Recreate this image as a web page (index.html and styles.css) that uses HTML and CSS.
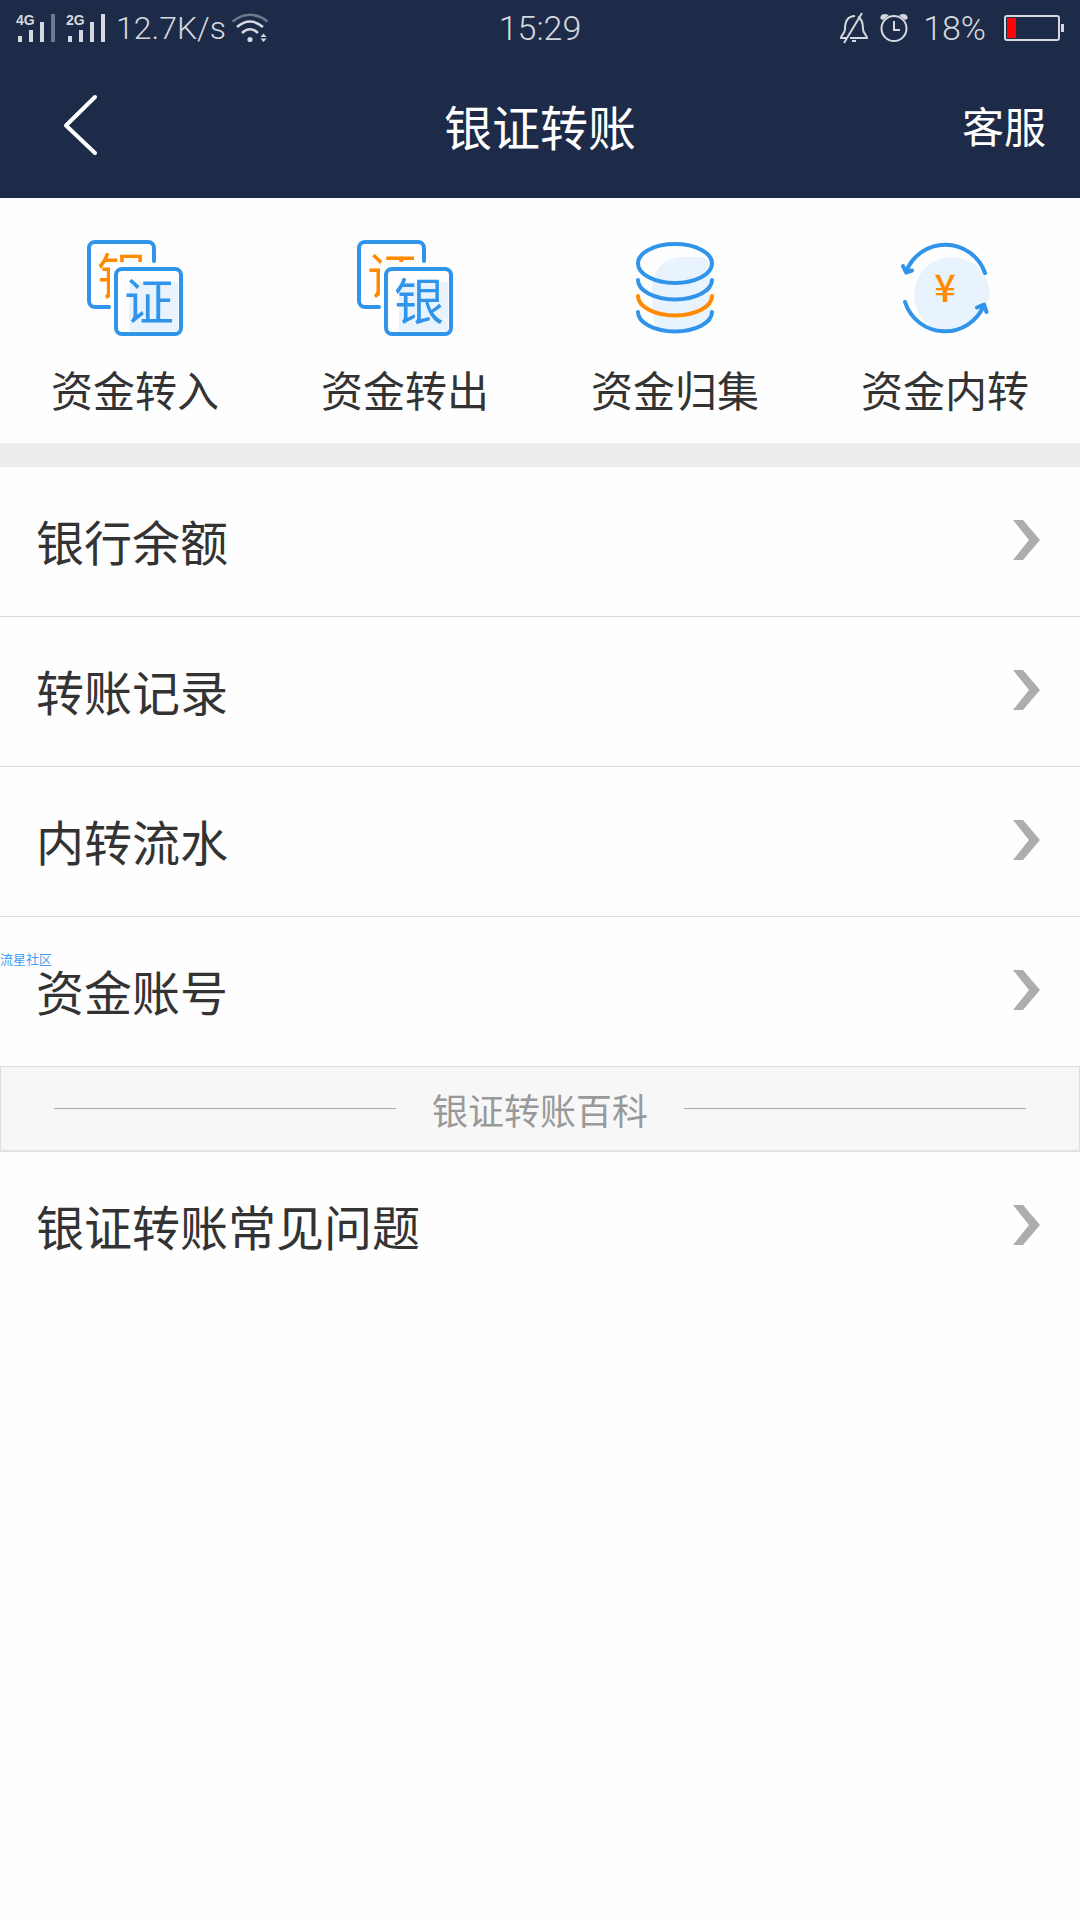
FILE: index.html
```html
<!DOCTYPE html>
<html lang="zh-CN">
<head>
<meta charset="utf-8">
<meta name="viewport" content="width=device-width, initial-scale=1">
<title>银证转账</title>
<link rel="stylesheet" href="styles.css">
</head>
<body>
<header class="top">
  <div class="status">
    <div class="status-side">
      <svg class="signal" width="40" height="30" viewBox="0 0 40 30" aria-hidden="true">
        <text class="net" x="0" y="12">4G</text>
        <path d="M2 23h4v6H2zM13 17h4v12h-4zM24 9h4v20h-4z"/><path class="dim" d="M35 1h4v28h-4z"/>
      </svg>
      <svg class="signal signal-second" width="40" height="30" viewBox="0 0 40 30" aria-hidden="true">
        <text class="net" x="0" y="12">2G</text>
        <path d="M2 23h4v6H2zM13 17h4v12h-4zM24 9h4v20h-4zM35 1h4v28h-4z"/>
      </svg>
      <span class="speed">12.7K/s</span>
      <svg width="38" height="30" viewBox="0 0 38 30" aria-hidden="true">
        <g fill="none" stroke="currentColor" stroke-width="2.6">
          <path class="dim" d="M1.500 8.500Q19-5 36.500 8.500"/>
          <path d="M6 14Q19 3 32 14M11 20Q19 12.500 27 20"/>
        </g>
        <circle cx="19" cy="26.500" r="2.600" fill="currentColor"/>
        <path d="M29.500 24l3-3.500 3 3.500zM29.500 25.500h6l-3 3.500z" fill="currentColor"/>
      </svg>
    </div>
    <time class="clock">15:29</time>
    <div class="status-side status-right">
      <svg width="30" height="32" viewBox="0 0 30 32" fill="none" stroke="currentColor" stroke-width="2" aria-hidden="true">
        <path d="M7 26H2c0-3 4-4 4-9C6 8 9 4 16 4M19 5c4 2 5 6 5 12 0 5 4 6 4 9H11M5 31L23 1M13 29h4"/>
      </svg>
      <svg width="30" height="32" viewBox="0 0 30 32" fill="none" stroke="currentColor" stroke-width="2" aria-hidden="true">
        <circle cx="15" cy="16.500" r="12.500"/><path d="M15 9v9h6"/>
        <path d="M2.500 7C2 3.500 5 2 8 3.500L3 7.500M27.500 7c.5-3.500-2.500-5-5.500-3.500l5 4" fill="currentColor"/>
      </svg>
      <span class="percent">18%</span>
      <svg width="60" height="26" viewBox="0 0 60 26" aria-hidden="true">
        <rect x="1" y="1" width="54" height="24" rx="2" fill="none" stroke="currentColor" stroke-width="2"/>
        <path d="M3 3h9v20H3z" fill="#ff0505"/><path d="M57 9h3v8h-3z" fill="currentColor"/>
      </svg>
    </div>
  </div>
  <div class="titlebar">
    <button class="back" type="button" aria-label="返回">
      <svg width="36" height="62" viewBox="0 0 36 62" fill="none" stroke="currentColor" stroke-width="4" stroke-linecap="round" stroke-linejoin="round" aria-hidden="true"><path d="M33 3L4 31.500L33 59"/></svg>
    </button>
    <h1 class="title">银证转账</h1>
    <a class="service" href="#service">客服</a>
  </div>
</header>
<main>
  <nav class="actions">
    <a class="action" href="#in">
      <svg class="icon" viewBox="0 0 110 110" aria-hidden="true">
        <defs><clipPath id="peek"><path d="M0 0H74V32H38L30 37V110H0z"/></clipPath></defs>
        <path class="tint" d="M49 52H98V101H49z"/>
        <path class="blue" d="M74 31V18a6 6 0 0 0-6-6H15a6 6 0 0 0-6 6V71a6 6 0 0 0 6 6H29"/>
        <rect class="blue" x="36" y="39" width="65" height="65" rx="6"/>
        <text class="glyph glyph-orange" x="17" y="65" clip-path="url(#peek)">银</text>
        <text class="glyph" x="44" y="90">证</text>
      </svg>
      <span>资金转入</span>
    </a>
    <a class="action" href="#out">
      <svg class="icon" viewBox="0 0 110 110" aria-hidden="true">
        <path class="tint" d="M49 52H98V101H49z"/>
        <path class="blue" d="M74 31V18a6 6 0 0 0-6-6H15a6 6 0 0 0-6 6V71a6 6 0 0 0 6 6H29"/>
        <rect class="blue" x="36" y="39" width="65" height="65" rx="6"/>
        <text class="glyph glyph-orange" x="17" y="65" clip-path="url(#peek)">证</text>
        <text class="glyph" x="44" y="90">银</text>
      </svg>
      <span>资金转出</span>
    </a>
    <a class="action" href="#collect">
      <svg class="icon" viewBox="0 0 110 110" aria-hidden="true">
        <path class="tint" d="M32 60C32 38 46 27 64 27H80C86 28 89 31 90 36V86C85 98 60 102 55 102C45 102 36 98 34 92C32 82 32 70 32 60z"/>
        <ellipse class="blue" cx="55" cy="33.500" rx="37" ry="19.500"/>
        <path class="blue" d="M18 50A37 19.500 0 0 0 92 50M18 82A37 19.500 0 0 0 92 82"/>
        <path class="blue orange" d="M18 66A37 19.500 0 0 0 92 66"/>
      </svg>
      <span>资金归集</span>
    </a>
    <a class="action" href="#internal">
      <svg class="icon" viewBox="0 0 110 110" aria-hidden="true">
        <defs><clipPath id="disc"><circle cx="55" cy="58" r="45"/></clipPath></defs>
        <circle class="tint" cx="62" cy="65" r="38" clip-path="url(#disc)"/>
        <path class="blue" d="M16 42A42 42 0 0 1 95 43M15 72A42 42 0 0 0 94 75M13 36L16 42.500L22 40.500M87 77.500L94 74.500L96.500 82"/>
        <text class="yen" x="55" y="72">¥</text>
      </svg>
      <span>资金内转</span>
    </a>
  </nav>
  <ul class="list">
    <li><a class="row" href="#balance">银行余额<svg class="chevron" viewBox="0 0 28 40" aria-hidden="true"><path d="M1 0H11L28 20L11 40H1L17 20z"/></svg></a></li>
    <li><a class="row" href="#records">转账记录<svg class="chevron" viewBox="0 0 28 40" aria-hidden="true"><path d="M1 0H11L28 20L11 40H1L17 20z"/></svg></a></li>
    <li><a class="row" href="#flow">内转流水<svg class="chevron" viewBox="0 0 28 40" aria-hidden="true"><path d="M1 0H11L28 20L11 40H1L17 20z"/></svg></a></li>
    <li class="marked"><span class="watermark">流星社区</span><a class="row" href="#account">资金账号<svg class="chevron" viewBox="0 0 28 40" aria-hidden="true"><path d="M1 0H11L28 20L11 40H1L17 20z"/></svg></a></li>
  </ul>
  <h2 class="section">银证转账百科</h2>
  <ul class="list">
    <li><a class="row" href="#faq">银证转账常见问题<svg class="chevron" viewBox="0 0 28 40" aria-hidden="true"><path d="M1 0H11L28 20L11 40H1L17 20z"/></svg></a></li>
  </ul>
</main>
</body>
</html>
```
FILE: styles.css
```css
* { box-sizing: border-box; }
body {
  margin: 0;
  background: #fefefe;
  color: #333;
  font-family: "Noto Sans CJK SC", sans-serif;
}
a { color: inherit; text-decoration: none; }
svg { display: block; flex: none; overflow: visible; }

.top { background: #1d2b48; color: #fff; }
.status {
  display: grid;
  grid-template-columns: 1fr auto 1fr;
  align-items: center;
  height: 56px;
  padding: 0 16px;
  color: #d5d8de;
  font: 300 34px/56px Roboto, sans-serif;
}
.status-side { display: flex; align-items: center; }
.status-right { justify-content: flex-end; }
.signal { fill: currentColor; }
.signal-second { margin-left: 10px; }
.net { font: 700 14px "Liberation Sans", sans-serif; }
.dim { opacity: .45; }
.speed { margin: 0 5px 0 10px; font-size: 32px; }
.status-right svg + svg { margin-left: 10px; }
.percent { margin: 0 18px 0 14px; }

.titlebar {
  display: grid;
  grid-template-columns: 1fr auto 1fr;
  align-items: center;
  height: 142px;
  padding: 0 34px 4px;
}
.back { justify-self: start; margin-left: 28px; padding: 0; border: 0; background: none; color: inherit; }
.title { margin: 0; font-size: 48px; font-weight: 400; line-height: 72px; }
.service { justify-self: end; font-size: 42px; line-height: 64px; }

.actions {
  display: grid;
  grid-template-columns: repeat(4, 1fr);
  padding: 32px 0 22px;
  border-bottom: 24px solid #ededed;
}
.action {
  display: flex;
  flex-direction: column;
  align-items: center;
  gap: 17px;
  font-size: 42px;
  line-height: 64px;
}
.icon { width: 110px; height: 110px; }
.tint { fill: #e8f3fd; }
.blue { fill: none; stroke: #2f94ea; stroke-width: 4; stroke-linecap: round; stroke-linejoin: round; }
.orange { stroke: #ff8a00; }
.glyph { font-size: 50px; font-weight: 400; fill: #2f94ea; }
.glyph-orange { fill: #ff8a00; }
.yen { font-size: 38px; font-weight: 500; text-anchor: middle; fill: #ff8a00; }

.list { margin: 0; padding: 0; list-style: none; }
.list li + li { border-top: 1px solid #ddd; }
.row {
  display: flex;
  align-items: center;
  justify-content: space-between;
  height: 149px;
  padding: 0 40px 4px 36px;
  font-size: 48px;
  line-height: 72px;
}
.chevron { width: 28px; height: 40px; fill: #adadad; }
.marked { position: relative; }
.watermark {
  position: absolute;
  left: 0;
  top: 32px;
  color: #3f9df5;
  font-size: 13px;
  line-height: 20px;
}
.section {
  display: flex;
  align-items: center;
  gap: 36px;
  height: 86px;
  margin: 0;
  padding: 0 53px;
  border: 1px solid #ddd;
  border-bottom: 2px solid #e2e2e2;
  background: #f7f7f7;
  color: #999;
  font-size: 36px;
  font-weight: 400;
  line-height: 54px;
}
.section::before, .section::after { content: ""; flex: 1; height: 1px; background: #aaa; }
```
